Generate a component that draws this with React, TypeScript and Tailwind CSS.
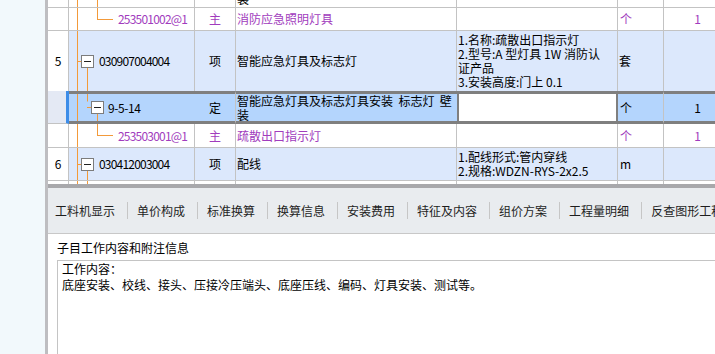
const LINE = "#f39a3a";

type Kind = "pass" | "leaf" | "parent" | "sel" | "end";

function Box({ x, c }: { x: number; c: number }) {
  return (
    <>
      <rect x={x + 0.5} y={c - 6} width="12" height="12" fill="#fff" stroke="#7c7c7c" />
      <line x1={x + 3} y1={c} x2={x + 10} y2={c} stroke="#222" />
    </>
  );
}

// tree connector lines drawn inside the code column
function Tree({ h, kind }: { h: number; kind: Kind }) {
  const c = Math.floor(h / 2) + 0.5;
  return (
    <svg className="absolute left-0 top-0" width="125" height={h}>
      <line x1="8.5" y1="0" x2="8.5" y2={h} stroke={LINE} />
      {kind === "pass" && <line x1="28.5" y1="0" x2="28.5" y2={h} stroke={LINE} />}
      {kind === "leaf" && (
        <>
          <line x1="28.5" y1="0" x2="28.5" y2={c} stroke={LINE} />
          <line x1="28" y1={c} x2="44" y2={c} stroke={LINE} />
        </>
      )}
      {kind === "parent" && (
        <>
          <line x1="8" y1={c} x2="12" y2={c} stroke={LINE} />
          <Box x={12} c={c} />
          <line x1="18.5" y1={c + 6.5} x2="18.5" y2={h} stroke={LINE} />
        </>
      )}
      {kind === "sel" && (
        <>
          <line x1="18.5" y1="0" x2="18.5" y2={c - 6} stroke={LINE} />
          <line x1="18" y1={c} x2="22" y2={c} stroke={LINE} />
          <Box x={22} c={c} />
          <line x1="28.5" y1={c + 6.5} x2="28.5" y2={h} stroke={LINE} />
        </>
      )}
      {kind === "end" && <line x1="18.5" y1="0" x2="18.5" y2={h} stroke={LINE} />}
    </svg>
  );
}

const cols = "grid grid-cols-[21px_126px_41px_221px_161px_46px_51px]";
const cell = "border-r border-[#c3c3c3]";
const purple = "text-[#a13cbd]";

const tabs = [
  "工料机显示",
  "单价构成",
  "标准换算",
  "换算信息",
  "安装费用",
  "特征及内容",
  "组价方案",
  "工程量明细",
  "反查图形工程量",
];

export default function App() {
  return (
    <div className="w-[715px] h-[354px] flex overflow-hidden bg-white text-[12px] text-black font-['Noto_Sans_CJK_SC',sans-serif]">
      <div className="w-[45px] shrink-0 bg-[#f2f9fc]" />
      <div className="w-[3px] shrink-0 bg-[#bebec1]" />

      <div className="flex-1 min-w-0 flex flex-col">
        <div className="h-[184px] shrink-0 overflow-hidden leading-[14px]">
          {/* row cut at the top */}
          <div className={`${cols} h-[8px] border-b border-[#c3c3c3]`}>
            <div className={cell} />
            <div className={`${cell} relative`}>
              <Tree h={7} kind="pass" />
            </div>
            <div className={cell} />
            <div className={`${cell} overflow-hidden pl-[1px]`}>
              <div className="-mt-[8px]">装</div>
            </div>
            <div className={cell} />
            <div className={cell} />
            <div />
          </div>

          <div className={`${cols} h-[23px] border-b border-[#c3c3c3]`}>
            <div className={cell} />
            <div className={`${cell} relative flex items-center pl-[49px] ${purple}`}>
              <Tree h={22} kind="leaf" />
              <span className="relative tracking-[-0.8px]">253501002@1</span>
            </div>
            <div className={`${cell} flex items-center justify-center ${purple}`}>主</div>
            <div className={`${cell} flex items-center pl-[1px] ${purple}`}>消防应急照明灯具</div>
            <div className={cell} />
            <div className={`${cell} flex items-center pl-[2px] ${purple}`}>个</div>
            <div className={`flex items-center justify-end pr-[14px] ${purple}`}>1</div>
          </div>

          <div className={`${cols} h-[60px] bg-[#dce8fc]`}>
            <div className={`${cell} bg-white flex items-center justify-center`}>5</div>
            <div className={`${cell} relative flex items-center pl-[30px]`}>
              <Tree h={60} kind="parent" />
              <span className="relative tracking-[-0.8px]">030907004004</span>
            </div>
            <div className={`${cell} flex items-center justify-center`}>项</div>
            <div className={`${cell} flex items-center pl-[1px]`}>智能应急灯具及标志灯</div>
            <div className={`${cell} flex items-center pl-[1px] whitespace-nowrap`}>
              <div className="leading-[14px]">
                1.名称:疏散出口指示灯
                <br />
                2.型号:A 型灯具 1W 消防认
                <br />
                证产品
                <br />
                3.安装高度:门上 0.1
              </div>
            </div>
            <div className={`${cell} flex items-center pl-[1px]`}>套</div>
            <div />
          </div>

          {/* selected row */}
          <div className={`${cols} h-[33px]`}>
            <div className="bg-[#e4e9f4] border-r-[3px] border-r-[#3d8de8] border-b border-b-[#c3c3c3]" />
            <div className="relative flex items-center pl-[39px] bg-[#b4d5fd] border-y-[3px] border-[#7f7f7f]">
              <Tree h={27} kind="sel" />
              <span className="relative tracking-[-0.4px]">9-5-14</span>
            </div>
            <div className="flex items-center justify-center bg-[#b4d5fd] border-y-[3px] border-[#7f7f7f] border-r border-r-[#c3c3c3]">
              定
            </div>
            <div className="pl-[1px] bg-[#b4d5fd] border-y-[3px] border-[#7f7f7f] whitespace-pre overflow-hidden">
              {"智能应急灯具及标志灯具安装  标志灯  壁"}
              <br />
              装
            </div>
            <div className="bg-white border-y-[3px] border-x-2 border-[#7f7f7f]" />
            <div className="flex items-center pl-[2px] bg-[#b4d5fd] border-y-[3px] border-[#7f7f7f] border-r border-r-[#c3c3c3]">
              个
            </div>
            <div className="flex items-center justify-end pr-[14px] bg-[#b4d5fd] border-y-[3px] border-[#7f7f7f]">
              1
            </div>
          </div>

          <div className={`${cols} h-[24px] border-b border-[#c3c3c3]`}>
            <div className={cell} />
            <div className={`${cell} relative flex items-center pl-[49px] ${purple}`}>
              <Tree h={23} kind="leaf" />
              <span className="relative tracking-[-0.8px]">253503001@1</span>
            </div>
            <div className={`${cell} flex items-center justify-center ${purple}`}>主</div>
            <div className={`${cell} flex items-center pl-[1px] ${purple}`}>疏散出口指示灯</div>
            <div className={cell} />
            <div className={`${cell} flex items-center pl-[2px] ${purple}`}>个</div>
            <div className={`flex items-center justify-end pr-[14px] ${purple}`}>1</div>
          </div>

          <div className={`${cols} h-[33px] border-b border-[#c3c3c3] bg-[#dce8fc]`}>
            <div className={`${cell} bg-white flex items-center justify-center`}>6</div>
            <div className={`${cell} relative flex items-center pl-[30px]`}>
              <Tree h={32} kind="parent" />
              <span className="relative tracking-[-0.8px]">030412003004</span>
            </div>
            <div className={`${cell} flex items-center justify-center`}>项</div>
            <div className={`${cell} flex items-center pl-[1px]`}>配线</div>
            <div className={`${cell} flex items-center pl-[1px] whitespace-nowrap`}>
              <div>
                1.配线形式:管内穿线
                <br />
                2.规格:WDZN-RYS-2x2.5
              </div>
            </div>
            <div className={`${cell} flex items-center pl-[2px]`}>m</div>
            <div />
          </div>

          <div className={`${cols} h-[3px]`}>
            <div className={cell} />
            <div className={`${cell} relative`}>
              <Tree h={3} kind="end" />
            </div>
            <div className={cell} />
            <div className={cell} />
            <div className={cell} />
            <div className={cell} />
            <div />
          </div>
        </div>

        <div className="h-[4px] shrink-0 bg-[#a8a8ab]" />

        <div className="h-[46px] shrink-0 bg-[#e9ecef] border-b border-[#c8c8c8] flex items-center pl-[7px] whitespace-nowrap overflow-hidden text-[#1e1e1e]">
          {tabs.map((t, i) => (
            <div key={t} className="flex items-center shrink-0">
              <span>{t}</span>
              {i < tabs.length - 1 && <div className="ml-[12px] mr-[9px] w-px h-[17px] bg-[#c6c6c6]" />}
            </div>
          ))}
        </div>

        <div className="flex-1 min-h-0 flex flex-col pl-[9px]">
          <div className="mt-[7px] leading-[14px]">子目工作内容和附注信息</div>
          <div className="mt-[5px] flex-1 border-t border-l border-[#c4c4c4] pl-[4px] leading-[16px]">
            工作内容：
            <br />
            底座安装、校线、接头、压接冷压端头、底座压线、编码、灯具安装、测试等。
          </div>
        </div>
      </div>
    </div>
  );
}
